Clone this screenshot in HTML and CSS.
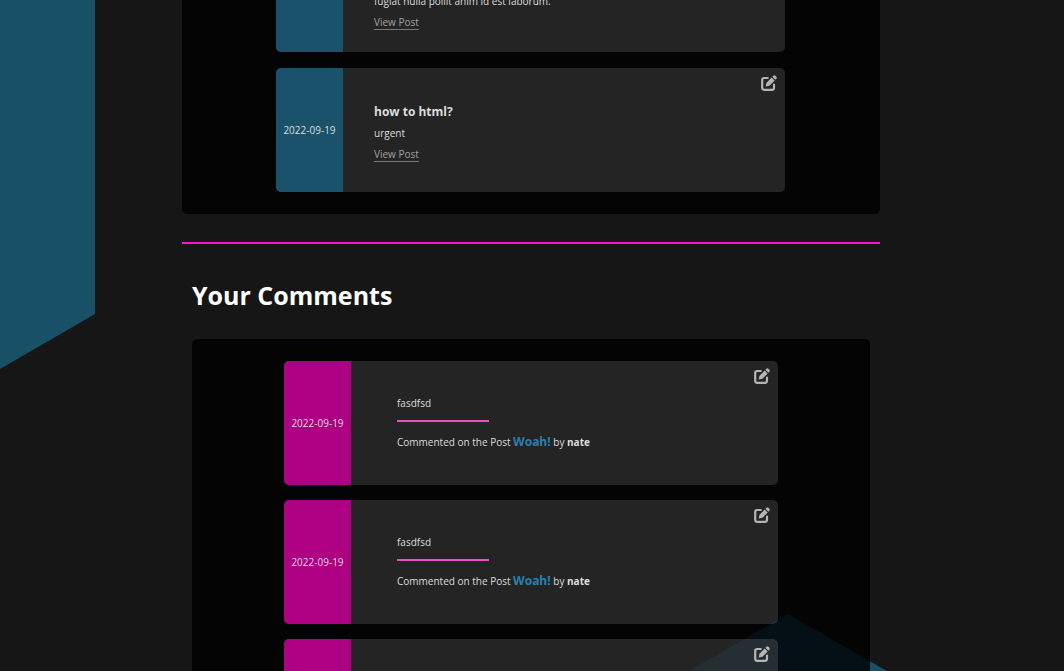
FILE: index.html
```
<!DOCTYPE html>
<html lang="en">
<head>
<meta charset="utf-8">
<title>Your Profile</title>
<link rel="stylesheet" href="styles.css">
</head>
<body>
<svg class="symbols" aria-hidden="true"><symbol id="edit" viewBox="0 0 16 16"><path d="M6.800 3H3.200Q1.200 3 1.200 5v7.800q0 2 2 2H11q2 0 2-2V9.600" fill="none" stroke="currentColor" stroke-width="2.200" stroke-linecap="round"/><path d="M5.500 7.700 10.700 2.500 13.700 5.500 8.500 10.700 4.600 11.600ZM11.400 1.800 12.400.8q1-1 2 0l.9.900q1 1 0 2L14.400 4.800Z" fill="currentColor"/></symbol></svg>
<div class="shape shape-left"></div>
<div class="shape shape-right"></div>
<main class="page">
  <section class="panel posts">
    <article class="card">
      <time class="date date-post"></time>
      <div class="body body-end">
        <p>fugiat nulla pollit anim id est laborum.</p>
        <p><a class="view" href="#">View Post</a></p>
      </div>
    </article>
    <article class="card">
      <time class="date date-post">2022-09-19</time>
      <div class="body">
        <h3>how to html?</h3>
        <p>urgent</p>
        <p><a class="view" href="#">View Post</a></p>
      </div>
      <button class="edit" type="button" aria-label="Edit post"><svg><use href="#edit"/></svg></button>
    </article>
  </section>
  <hr class="divider">
  <section class="comments">
    <h2>Your Comments</h2>
    <div class="panel">
      <article class="card">
        <time class="date date-comment">2022-09-19</time>
        <div class="body comment">
          <p>fasdfsd</p>
          <hr>
          <p>Commented on the Post <a class="title" href="#">Woah!</a> by <strong>nate</strong></p>
        </div>
        <button class="edit" type="button" aria-label="Edit comment"><svg><use href="#edit"/></svg></button>
      </article>
      <article class="card">
        <time class="date date-comment">2022-09-19</time>
        <div class="body comment">
          <p>fasdfsd</p>
          <hr>
          <p>Commented on the Post <a class="title" href="#">Woah!</a> by <strong>nate</strong></p>
        </div>
        <button class="edit" type="button" aria-label="Edit comment"><svg><use href="#edit"/></svg></button>
      </article>
      <article class="card">
        <time class="date date-comment"></time>
        <div class="body comment"></div>
        <button class="edit" type="button" aria-label="Edit comment"><svg><use href="#edit"/></svg></button>
      </article>
    </div>
  </section>
</main>
</body>
</html>
```
FILE: styles.css
```
* { box-sizing: border-box; margin: 0; }
body {
  height: 100vh;
  overflow: hidden;
  background: #161616;
  color: #dcdcdc;
  font: 10px/21px "Open Sans", sans-serif;
}
.symbols { display: none; }
.shape { position: absolute; z-index: -1; background: #185068; }
.shape-left { left: 0; top: 0; width: 95px; height: 369px; clip-path: polygon(0 0, 100% 0, 100% 314px, 0 100%); }
.shape-right { left: 684px; top: 614px; width: 208px; height: 200px; clip-path: polygon(50% 0, 100% 60px, 100% 100%, 0 100%, 0 60px); }
.page { padding: 0 184px 0 182px; margin-top: -94px; }
.panel {
  display: flex;
  flex-direction: column;
  gap: 15px;
  padding: 22px 92px;
  border-radius: 5px;
  background: rgba(0, 0, 0, .8);
}
.posts { gap: 16px; padding-left: 94px; padding-right: 95px; }
.card {
  position: relative;
  display: flex;
  min-height: 124px;
  border-radius: 5px;
  overflow: hidden;
  background: rgba(255, 255, 255, .13);
}
.date { display: flex; flex: 0 0 67px; align-items: center; justify-content: center; }
.date-post { background: #1a526c; }
.date-comment { background: #ae0083; }
.body { flex: 1; padding: 33px 31px 27px; }
.body-end { align-self: flex-end; padding-bottom: 19px; }
.comment { padding: 32px 46px; }
.body hr { width: 92px; height: 2px; margin: 6px 0 9px; border: 0; background: #ea4fc6; }
h3 { font-size: 12px; line-height: 22px; }
.view { color: #a0a0a0; text-decoration: none; border-bottom: 1px solid #777; }
.title { color: #2980b0; font-size: 12px; font-weight: 700; text-decoration: none; }
.edit {
  position: absolute;
  top: 7px;
  right: 8px;
  padding: 0;
  border: 0;
  background: none;
  color: #b4b4b4;
}
.edit svg { display: block; width: 16px; height: 16px; }
.divider { height: 2px; margin: 28px 0 0; border: 0; background: #ff14c8; }
.comments { padding: 34px 10px 0; }
h2 { margin-bottom: 26px; color: #fff; font-size: 25px; line-height: 35px; }
```
